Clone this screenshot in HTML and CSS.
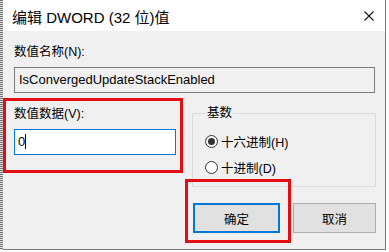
FILE: index.html
```html
<!DOCTYPE html>
<html lang="zh-CN">
<head>
<meta charset="utf-8">
<title>编辑 DWORD (32 位)值</title>
<link rel="stylesheet" href="styles.css">
</head>
<body>
<div class="frame">
  <div class="marquee"></div>
  <div class="window">
    <div class="titlebar">
      <span class="title">编辑 DWORD (32 位)值</span>
      <svg class="close" width="10" height="10" viewBox="0 0 10 10"><path d="M0.5 0.5 L9.5 9.5 M9.5 0.5 L0.5 9.5" stroke="#1a1a1a" stroke-width="1.1" fill="none"/></svg>
    </div>
    <div class="content">
      <div class="name-row">
        <div class="label">数值名称(N):</div>
        <div class="field readonly">IsConvergedUpdateStackEnabled</div>
      </div>
      <div class="mid">
        <div class="redbox data">
          <div class="label">数值数据(V):</div>
          <div class="field active">0<span class="caret"></span></div>
        </div>
        <fieldset class="group">
          <legend>基数</legend>
          <div class="radio"><span class="dot checked"></span><span>十六进制(H)</span></div>
          <div class="radio"><span class="dot"></span><span>十进制(D)</span></div>
        </fieldset>
      </div>
      <div class="buttons">
        <div class="okwrap">
          <button class="btn ok">确定</button>
          <div class="mark"></div>
        </div>
        <button class="btn cancel">取消</button>
      </div>
    </div>
  </div>
</div>
</body>
</html>
```
FILE: styles.css
```css
html, body {
  margin: 0;
  padding: 0;
  background: #ffffff;
}
body {
  font-family: "Liberation Sans", "Noto Sans CJK SC", sans-serif;
  font-size: 12.5px;
  color: #000;
  width: 389px;
  height: 252px;
  overflow: hidden;
}
.frame {
  display: flex;
  height: 250px;
}
.marquee {
  width: 3px;
  height: 250px;
  background: repeating-linear-gradient(to bottom, #6e6e6e 0 1px, #e4e4e4 1px 2px);
}
.window {
  width: 382px;
  height: 249px;
  background: #f0f0f0;
  border-right: 1px solid #7a7a7a;
  border-bottom: 1px solid #7a7a7a;
  display: flex;
  flex-direction: column;
}
.titlebar {
  height: 31px;
  background: #ffffff;
  display: flex;
  align-items: center;
  justify-content: space-between;
  padding: 0 11px 0 9px;
}
.title {
  font-size: 15px;
  color: #000;
  padding-top: 1px;
}
.close {
  display: block;
}
.content {
  display: flex;
  flex-direction: column;
}
.name-row {
  padding: 13px 10px 0 11px;
}
.label {
  line-height: 17px;
  height: 17px;
  white-space: nowrap;
}
.field {
  box-sizing: border-box;
  height: 26px;
  line-height: 24px;
  font-size: 13px;
  border: 1px solid #7a7a7a;
  padding: 0 4px;
  white-space: nowrap;
  overflow: hidden;
}
.name-row .field {
  margin-top: 6px;
  background: #f0f0f0;
}
.mid {
  display: flex;
  align-items: flex-start;
  margin-top: 5px;
}
.redbox.data {
  box-sizing: border-box;
  width: 180px;
  height: 75px;
  border: 3px solid #e50d13;
  padding: 5px 4px 0 8px;
}
.field.active {
  margin-top: 6px;
  background: #ffffff;
  border-color: #0078d7;
  padding-left: 3px;
}
.caret {
  display: inline-block;
  width: 1px;
  height: 15px;
  background: #000;
  vertical-align: -3px;
}
.group {
  box-sizing: border-box;
  margin: 7px 0 0 9px;
  width: 184px;
  height: 82px;
  border: 1px solid #dcdcdc;
  padding: 11px 0 0 12px;
  min-width: 0;
}
.group legend {
  padding: 0 1px;
  margin-left: 1px;
  line-height: 17px;
}
.radio {
  display: flex;
  align-items: center;
  height: 17px;
  gap: 3px;
  margin-bottom: 9px;
}
.dot {
  box-sizing: border-box;
  width: 13px;
  height: 13px;
  border: 1px solid #333;
  border-radius: 50%;
  background: #fff;
  display: flex;
  align-items: center;
  justify-content: center;
}
.dot.checked::after {
  content: "";
  width: 7px;
  height: 7px;
  border-radius: 50%;
  background: #333;
}
.buttons {
  display: flex;
  margin: 16px 0 0 190px;
  gap: 13px;
}
.okwrap {
  position: relative;
}
.btn {
  box-sizing: border-box;
  height: 30px;
  font-family: "Liberation Sans", "Noto Sans CJK SC", sans-serif;
  font-size: 12.5px;
  color: #000;
  background: #e1e1e1;
  border: 1px solid #adadad;
  padding: 0;
  display: block;
}
.ok {
  width: 87px;
  border: 2px solid #0078d7;
}
.cancel {
  width: 83px;
}
.mark {
  position: absolute;
  left: -8px;
  top: -24px;
  right: -11px;
  bottom: -10px;
  border: 3px solid #e50d13;
}
```
